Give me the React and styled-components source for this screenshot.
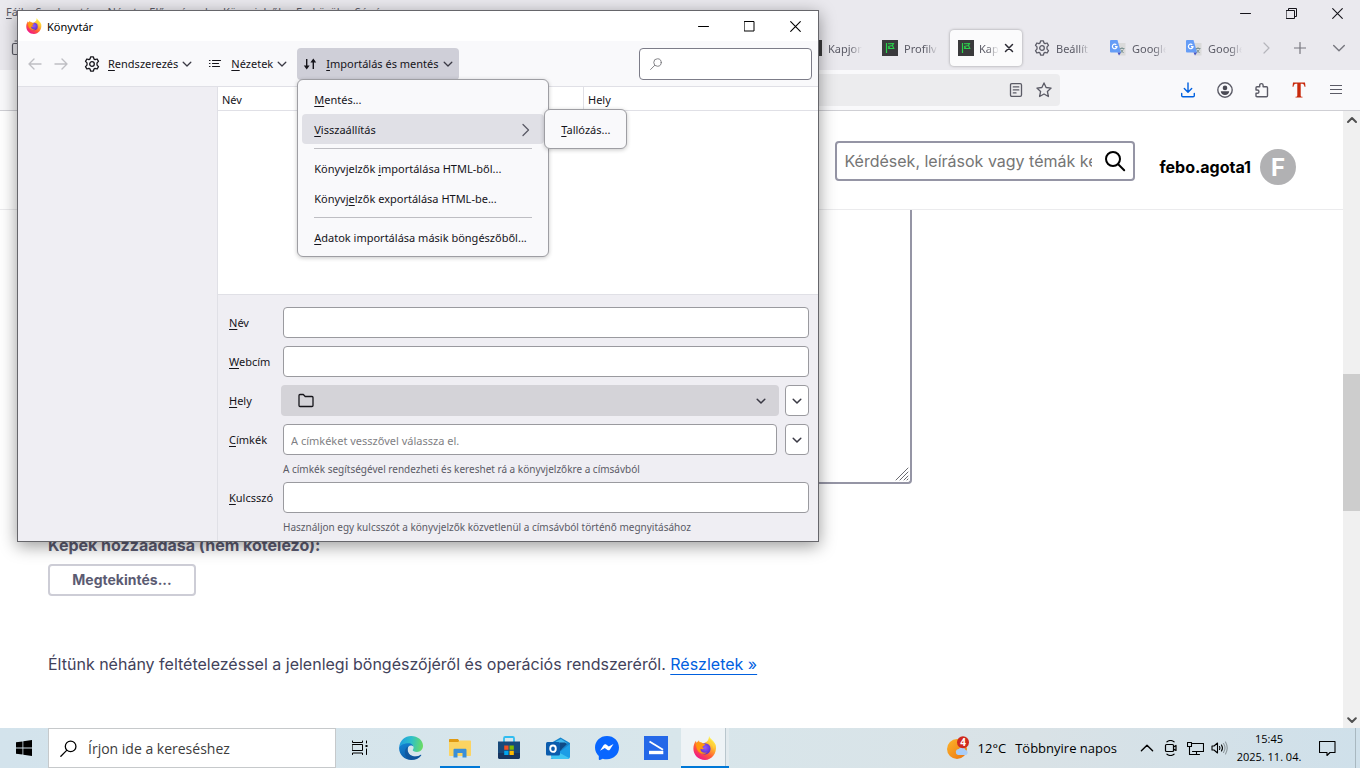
import React, { useState } from "react";
import styled, { createGlobalStyle, css } from "styled-components";

const ui = `"Noto Sans", "Open Sans", sans-serif`;
const shell = `"Open Sans", "Noto Sans", sans-serif`;
const inter = `Inter, "Liberation Sans", sans-serif`;

const GlobalStyle = createGlobalStyle`
  * {
    box-sizing: border-box;
  }
  body {
    margin: 0;
    overflow: hidden;
    background: #ffffff;
    font-family: ${ui};
    font-size: 11px;
    color: #15141a;
  }
  button, input, select, textarea {
    font: inherit;
    color: inherit;
    margin: 0;
    outline: none;
  }
  svg {
    display: block;
    flex: none;
  }
  u {
    text-underline-offset: 2px;
  }
`;

const Desktop = styled.div`
  position: relative;
  display: flex;
  flex-direction: column;
  height: 100vh;
`;

/* ---------- browser ---------- */

const Browser = styled.div`
  flex: 1;
  min-height: 0;
  display: flex;
  flex-direction: column;
`;

const PlainButton = styled.button`
  display: flex;
  align-items: center;
  justify-content: center;
  padding: 0;
  border: none;
  background: none;
`;

const MenuBar = styled.div`
  display: flex;
  align-items: center;
  height: 26px;
  background: #eae9ee;
`;

const MenuList = styled.div`
  display: flex;
  flex: 1;
  gap: 12px;
  padding: 0 6px 4px;
  color: #5b5b66;
`;

const WindowButton = styled(PlainButton)`
  width: 46px;
  height: ${p => p.$height || 26}px;
`;

const TabStrip = styled.div`
  display: flex;
  align-items: center;
  height: 44px;
  padding-left: 11px;
  background: #eae9ee;
  color: #5b5b66;
`;

const Tabs = styled.div`
  display: flex;
  flex: 1;
  justify-content: flex-end;
  gap: 4px;
`;

const Tab = styled(PlainButton)`
  width: 72px;
  height: 36px;
  padding: 0 8px;
  gap: 6px;
  justify-content: flex-start;
  border-radius: 4px;
  ${p =>
    p.$active &&
    css`
      gap: 5px;
      background: #fbfbfc;
      box-shadow: 0 0 3px rgba(0, 0, 0, 0.35);
    `}
`;

const TabLabel = styled.span`
  flex: 1;
  overflow: hidden;
  white-space: nowrap;
  text-align: left;
  mask-image: linear-gradient(to left, transparent, #000 12px);
`;

const StripButton = styled(PlainButton)`
  width: ${p => p.$width}px;
  height: 36px;
`;

const NavBar = styled.div`
  display: flex;
  align-items: center;
  height: 41px;
  padding: 0 6px 0 100px;
  background: #f9f9fb;
  border-bottom: 1px solid #cfcfd4;
  color: #5b5b66;
`;

const UrlBar = styled.div`
  display: flex;
  flex: 1;
  align-items: center;
  justify-content: flex-end;
  height: 32px;
  padding-right: 2px;
  margin-right: 109px;
  border-radius: 4px;
  background: #ececee;
`;

const ToolIcon = styled(PlainButton)`
  width: ${p => p.$width || 37}px;
  height: 32px;
`;

const Viewport = styled.div`
  flex: 1;
  min-height: 0;
  display: flex;
`;

const Page = styled.main`
  flex: 1;
  min-width: 0;
  overflow: hidden;
  font-family: ${inter};
  font-size: 16px;
`;

const PageHeader = styled.header`
  display: flex;
  align-items: center;
  justify-content: flex-end;
  gap: 25px;
  height: 99px;
  padding: 0 47px 0 48px;
  border-bottom: 1px solid #ebebed;
`;

const SiteSearch = styled.label`
  display: flex;
  align-items: center;
  width: 300px;
  height: 40px;
  margin-top: 2px;
  padding: 0 7px 0 8px;
  border: 2px solid #9595a5;
  border-radius: 4px;
  input {
    flex: 1;
    min-width: 0;
    margin-right: 12px;
    padding: 0;
    border: none;
    background: none;
  }
  input::placeholder {
    color: #757575;
    opacity: 1;
  }
`;

const Account = styled.a`
  display: flex;
  align-items: center;
  gap: 9px;
  margin-top: 14px;
  color: #000000;
  font-weight: 700;
  text-decoration: none;
`;

const Avatar = styled.span`
  display: flex;
  align-items: center;
  justify-content: center;
  width: 36px;
  height: 36px;
  border-radius: 50%;
  background: #b1b1b3;
  color: #ffffff;
  font-size: 24px;
`;

const Question = styled.form`
  display: flex;
  flex-direction: column;
  align-items: flex-start;
  padding: 0 48px;
  color: #5b5b72;
`;

const Details = styled.textarea`
  width: 864px;
  height: 274px;
  border: 2px solid #9595a5;
  border-top: none;
  border-radius: 0 0 4px 4px;
  resize: none;
`;

const DetailsWrap = styled.div`
  position: relative;
  display: flex;
  svg {
    position: absolute;
    right: 3px;
    bottom: 3px;
  }
`;

const FieldTitle = styled.h2`
  margin: 50px 0 8px;
  font-size: 16px;
  line-height: 22px;
  font-weight: 700;
`;

const Browse = styled.button`
  width: 148px;
  height: 32px;
  padding: 0 0 2px;
  border: 2px solid #cdcdd6;
  border-radius: 4px;
  background: #ffffff;
  font-size: 14px;
  font-weight: 700;
`;

const Notice = styled.p`
  margin: 56px 0 0;
  line-height: 24px;
  color: #42425a;
  a {
    color: #0060df;
    text-underline-offset: 4px;
  }
`;

const ScrollBar = styled.div`
  display: flex;
  flex-direction: column;
  align-items: center;
  width: 17px;
  background: #f0f0f0;
`;

const ScrollTrack = styled.div`
  flex: 1;
  width: 100%;
  display: grid;
  grid-template-rows: 246fr 137fr 200fr;
  &::before {
    content: "";
    grid-row: 2;
    background: #cdcdcd;
  }
`;

const ScrollButton = styled(PlainButton)`
  width: 17px;
  height: 17px;
`;

/* ---------- library window ---------- */

const LibraryWindow = styled.section`
  position: absolute;
  left: 17px;
  top: 10px;
  width: 802px;
  display: flex;
  flex-direction: column;
  border: 1px solid #66666b;
  background: #ffffff;
  box-shadow: 0 4px 16px rgba(0, 0, 0, 0.4);
`;

const TitleBar = styled.header`
  display: flex;
  align-items: center;
  height: 30px;
  padding-left: 8px;
  color: #000000;
  h1 {
    flex: 1;
    margin: 0 0 0 5px;
    font-size: 11px;
    font-weight: 400;
  }
`;

const Toolbar = styled.div`
  display: flex;
  align-items: center;
  height: 46px;
  padding: 0 6px 0 4px;
  background: #f9f9fb;
  border-bottom: 1px solid #e0e0e6;
`;

const ToolButton = styled(PlainButton)`
  height: 32px;
  padding: 0 6px;
  gap: ${p => p.$gap}px;
  border-radius: 4px;
  white-space: nowrap;
  background: ${p => (p.$open ? "#cfcfd8" : "none")};
`;

const ToolText = styled.span`
  display: flex;
  align-items: center;
  gap: 4px;
`;

const MenuAnchor = styled.div`
  position: relative;
  margin-left: 4px;
`;

const Popup = styled.div`
  position: absolute;
  z-index: 1;
  border: 1px solid #9e9ea3;
  border-radius: 6px;
  padding: 4px;
  background: #f9f9fb;
  box-shadow: 0 1px 4px rgba(0, 0, 0, 0.22);
`;

const MainPopup = styled(Popup)`
  left: 0;
  top: 31px;
  width: 252px;
`;

const SubPopup = styled(Popup)`
  left: 242px;
  top: -5px;
  width: 83px;
`;

const SubAnchor = styled.div`
  position: relative;
`;

const MenuItem = styled(PlainButton)`
  width: 100%;
  height: 30px;
  padding: 2px 12px 0;
  justify-content: space-between;
  border-radius: 4px;
  white-space: nowrap;
  background: ${p => (p.$active ? "#e0e0e6" : "none")};
`;

const Separator = styled.hr`
  margin: 4px 12px;
  border: none;
  height: 1px;
  background: #bebec3;
`;

const LibrarySearch = styled.label`
  display: flex;
  align-items: center;
  width: 173px;
  height: 32px;
  margin-left: auto;
  padding: 0 10px;
  border: 1px solid #7c7c88;
  border-radius: 4px;
  background: #ffffff;
  input {
    flex: 1;
    min-width: 0;
    border: none;
    background: none;
  }
`;

const LibraryBody = styled.div`
  display: grid;
  grid-template-columns: 200px 1fr;
`;

const Sidebar = styled.nav`
  background: #efeef3;
  border-right: 1px solid #e0e0e6;
`;

const Places = styled.div`
  height: 207px;
  background: #ffffff;
`;

const PlacesTable = styled.table`
  width: 100%;
  table-layout: fixed;
  border-collapse: separate;
  border-spacing: 0;
  th {
    height: 24px;
    padding: 2px 4px 0;
    font-weight: 400;
    text-align: left;
    border-bottom: 1px solid #e0e0e6;
  }
  th:first-child {
    width: 366px;
    border-right: 1px solid #e0e0e6;
  }
`;

const DetailsPane = styled.div`
  display: grid;
  grid-template-columns: 54px 1fr;
  row-gap: 8px;
  padding: 12px 9px 0 11px;
  border-top: 1px solid #e0e0e6;
  background: #efeef3;
`;

const Label = styled.label`
  align-self: start;
  line-height: 31px;
`;

const Cell = styled.div`
  display: flex;
  flex-wrap: wrap;
  gap: 0 8px;
`;

const Field = styled.input`
  flex: 1;
  min-width: 0;
  height: 31px;
  padding: 2px 7px 0;
  border: 1px solid #9a9a9f;
  border-radius: 4px;
  background: #ffffff;
  &::placeholder {
    color: #7f7f84;
    opacity: 1;
  }
`;

const Hint = styled.p`
  width: 100%;
  margin: 0 0 ${p => (p.$last ? 0 : -8)}px;
  height: ${p => (p.$last ? 28 : 27)}px;
  line-height: 28px;
  font-size: 10px;
  color: #5b5b66;
`;

const FolderPicker = styled.div`
  position: relative;
  flex: 1;
  margin: 0 -2px;
  select {
    display: block;
    width: 100%;
    height: 31px;
    appearance: none;
    border: none;
    border-radius: 4px;
    background: #d4d3d8;
  }
  svg {
    position: absolute;
    top: 8px;
    left: 17px;
    pointer-events: none;
  }
  svg + svg {
    left: auto;
    right: 13px;
    top: 11px;
  }
`;

const Expander = styled(PlainButton)`
  width: 24px;
  height: 31px;
  border: 1px solid #9a9a9f;
  border-radius: 4px;
  background: #ffffff;
`;

/* ---------- taskbar ---------- */

const Taskbar = styled.footer`
  display: flex;
  align-items: stretch;
  height: 40px;
  font-family: ${shell};
  background: linear-gradient(90deg, #d3e3ec, #d8e6eb 50%, #d9e2e6 76%, #cfe0ea);
  color: #000000;
`;

const StartButton = styled(PlainButton)`
  width: 48px;
`;

const TaskSearch = styled.label`
  display: flex;
  align-items: center;
  gap: 11px;
  width: 288px;
  padding-left: 11px;
  border: 1px solid #c6c9cb;
  background: #ffffff;
  input {
    flex: 1;
    min-width: 0;
    padding: 0;
    border: none;
    background: none;
    font-size: 14px;
  }
  input::placeholder {
    color: #3c3c3c;
    opacity: 1;
  }
`;

const TaskApps = styled.div`
  display: flex;
  gap: 1px;
  margin-left: 3px;
`;

const AppButton = styled(PlainButton)`
  width: 48px;
  border-bottom: 2px solid transparent;
  padding-top: 2px;
  ${p =>
    p.$active &&
    css`
      background: linear-gradient(90deg, #eef3f6 44px, #b9c6cd 44px, #b9c6cd 45px, #e2eaee 45px);
      border-bottom-color: #0078d7;
    `}
  ${p =>
    p.$running &&
    css`
      position: relative;
      &::after {
        content: "";
        position: absolute;
        left: 4px;
        right: 4px;
        bottom: -2px;
        height: 2px;
        background: #0078d7;
      }
    `}
`;

const Tray = styled.div`
  display: flex;
  align-items: center;
  margin-left: auto;
`;

const Weather = styled(PlainButton)`
  gap: 9px;
  font-size: 13px;
  margin-right: 18px;
  white-space: nowrap;
`;

const TrayButton = styled(PlainButton)`
  width: 24px;
  height: 40px;
`;

const Clock = styled.time`
  display: flex;
  flex-direction: column;
  align-items: center;
  width: 76px;
  line-height: 18px;
  white-space: nowrap;
`;

const Notifications = styled(PlainButton)`
  width: 40px;
  height: 40px;
`;

const ShowDesktop = styled(PlainButton)`
  width: 5px;
  height: 40px;
  margin-left: 8px;
  border-left: 1px solid #a9b8c0;
`;

/* ---------- icons ---------- */

const Stroke = ({ w = 16, h = w, box, d, sw = 1, color = "currentColor", children }) => (
  <svg
    width={w}
    height={h}
    viewBox={box || `0 0 ${w} ${h}`}
    fill="none"
    stroke={color}
    strokeWidth={sw}
    strokeLinecap="round"
    strokeLinejoin="round"
  >
    {d && <path d={d} />}
    {children}
  </svg>
);

const Chevron = ({ size = 10, sw = 1.3, color = "#3a3944" }) => (
  <Stroke w={size} box="0 0 10 10" d="M1.2 3.2L5 7l3.8-3.8" sw={sw} color={color} />
);

const ChevronUp = ({ size = 10, sw = 1.4, color }) => (
  <Stroke w={size} box="0 0 10 10" d="M1 7l4-4 4 4" sw={sw} color={color} />
);

const CloseIcon = ({ size = 11, sw = 1.1 }) => (
  <Stroke w={size} box="0 0 11 11" d="M.7.7l9.6 9.6M10.3.7L.7 10.3" sw={sw} />
);

const Gear = ({ size = 16 }) => (
  <Stroke w={size} box="0 0 16 16" sw={1.3}>
    <path d="M6.6.9h2.8l.5 2 1.2.7 2-.6 1.4 2.4-1.5 1.5v2.2l1.5 1.5-1.4 2.4-2-.6-1.2.7-.5 2H6.6l-.5-2-1.2-.7-2 .6-1.4-2.4L3 9.1V6.9L1.5 5.400 2.900 3l2 .6 1.200-.7z" />
    <circle cx="8" cy="8" r="2.300" />
  </Stroke>
);

const Firefox = ({ size, id }) => (
  <svg width={size} height={size} viewBox="0 0 24 24">
    <defs>
      <linearGradient id={`${id}a`} x1="0.8" y1="0.1" x2="0.25" y2="0.95">
        <stop offset="0" stopColor="#fff44f" />
        <stop offset="0.35" stopColor="#ffb02e" />
        <stop offset="0.65" stopColor="#ff5a36" />
        <stop offset="1" stopColor="#f0148c" />
      </linearGradient>
      <radialGradient id={`${id}b`} cx="0.5" cy="0.4" r="0.6">
        <stop offset="0" stopColor="#9059ff" />
        <stop offset="1" stopColor="#5b2fc9" />
      </radialGradient>
    </defs>
    <path
      fill={`url(#${id}a)`}
      d="M16 0c.6 2.200 4 4.200 5.800 7.200.6 1 .9 1.700 1.100 2.600C24 17.500 18.600 24 12 24 5.300 24 .4 19 .4 12.800c0-3 .8-5.700 2.500-8l.6 2L6 4.200l.7 2.300c1.300-.2 2.600 0 3.800.7C12.500 6.600 16 5.500 16 0z"
    />
    <circle cx="12" cy="12.800" r="5.600" fill={`url(#${id}b)`} />
    <path
      fill="#ff980e"
      d="M3 7.500c2-1.600 4.900-1.500 6.900.3l2.400.4c-.3 1.400-2.600 1.500-2.800 2.600 0 1 .7 1.500 1.900 1.500-1.200 1.200-2.900.9-3.900.4-.3 3.200 3.300 5 6.400 3.500C11.600 19.500 3 18.500 3 7.500z"
    />
    <path fill="#ffd43a" d="M16.200 2.500c3 3 5.800 6 4.800 10.500-.6-2.800-2.100-5-5.100-6.300 1-1.200 1-2.500.3-4.200z" />
  </svg>
);

const KapIcon = () => (
  <svg width="16" height="16" viewBox="0 0 16 16">
    <rect width="16" height="16" fill="#3a3a3c" />
    <path d="M4.500 3v10" stroke="#2bd34c" strokeWidth="1.200" />
    <path d="M6 3.800l5.500-.3-1 2 1.300 3H6.500M6 6.500l4.500-1M6 8.500l2-2" fill="none" stroke="#2bd34c" strokeWidth="1.100" />
  </svg>
);

const TranslateIcon = () => (
  <svg width="16" height="16" viewBox="0 0 16 16">
    <path d="M6 3h9.500v12.500H9z" fill="#dadada" />
    <path d="M9.500 8.500h5M12 7.200v1.300M10.500 9.500l3 3.500M13.500 9.500l-3 3.500" stroke="#7e9494" strokeWidth="1" />
    <path d="M1 0h6.500l3.500 12.500H1a1 1 0 0 1-1-1V1a1 1 0 0 1 1-1z" fill="#669df6" />
    <path d="M7.500 12.500H11l-2 3z" fill="#4453c4" />
    <path d="M6.300 4.800A2.300 2.300 0 1 0 7 6.600H5" fill="none" stroke="#fff" strokeWidth="1.200" />
  </svg>
);

const DownloadIcon = () => (
  <Stroke color="#0061e0" sw={1.4} d="M8 1v9M4.300 6.500L8 10.200l3.700-3.700M1.700 11.500v2c0 .7.500 1.200 1.200 1.200h10.200c.7 0 1.200-.5 1.200-1.200v-2" />
);

const AccountIcon = () => (
  <svg width="16" height="16" viewBox="0 0 16 16">
    <circle cx="8" cy="8" r="7.200" fill="none" stroke="#5b5b66" strokeWidth="1.400" />
    <circle cx="8" cy="5.900" r="2.300" fill="#4a4a54" />
    <path d="M3.800 9.300h8.400c0 2.200-1.900 3.700-4.200 3.700s-4.200-1.500-4.200-3.700z" fill="#4a4a54" />
  </svg>
);

const PuzzleIcon = () => (
  <Stroke sw={1.4} d="M5.700 4.800V3.300a1.700 1.700 0 0 1 3.400 0v1.500h3.400c.6 0 1 .4 1 1v8c0 .6-.4 1-1 1H3c-.6 0-1-.4-1-1v-2.500h1.300a1.600 1.600 0 0 0 0-3.300H2V5.800c0-.6.400-1 1-1z" />
);

const StarIcon = () => (
  <Stroke sw={1.300} d="M8 .9l2.100 4.600 5 .6-3.700 3.400 1 5L8 12l-4.400 2.500 1-5L.9 6.100l5-.6z" />
);

const ReaderIcon = () => (
  <Stroke w={14} h={16} sw={1.300} d="M2.800 1.700h8.400c.8 0 1.300.5 1.300 1.300v10c0 .8-.5 1.300-1.300 1.300H2.800c-.8 0-1.300-.5-1.300-1.300V3c0-.8.500-1.300 1.300-1.300zM4.300 4.900h5.500M4.300 7.900h5.500M4.300 10.900h2.700" />
);

const SwapIcon = () => (
  <svg width="14" height="14" viewBox="0 0 14 14">
    <path d="M3.700 2v8M10.300 12v-8" stroke="#15141a" strokeWidth="1.400" />
    <path d="M.8 8.500h5.800L3.700 12.500zM7.400 5.500h5.800L10.300 1.500z" fill="#15141a" />
  </svg>
);

const ListIcon = () => (
  <Stroke w={14} h={14} d="M1.500 3.500h.5M1.500 6.500h.5M1.500 9.500h.5M4.500 3.500h8M4.500 6.500h6M4.500 9.500h7" sw={1.200} />
);

const FolderIcon = () => (
  <Stroke sw={1.300} d="M1 12.500v-10c0-.6.400-1 1-1h3.300L7.200 3.500H14c.6 0 1 .4 1 1v8c0 .6-.4 1-1 1H2c-.6 0-1-.4-1-1z" />
);

const MagnifierLeft = ({ size = 12, sw = 1.200, color = "#77777c" }) => (
  <Stroke w={size} box="0 0 16 16" sw={sw} color={color}>
    <circle cx="10" cy="6" r="5" />
    <path d="M6.300 9.800L.8 15.300" />
  </Stroke>
);

const TypeIcon = () => (
  <svg width="14" height="16" viewBox="0 0 14 16">
    <path
      fill="#c8290b"
      d="M1 .5h12l.5 4.200h-1c-.3-1.700-.9-2.900-2.400-2.900H8.700v11.400c0 1.200.4 1.500 1.800 1.600v.7h-7v-.7c1.400-.1 1.800-.4 1.800-1.600V1.800H3.900C2.400 1.800 1.800 3 1.500 4.700h-1z"
    />
  </svg>
);

const EdgeIcon = () => (
  <svg width="24" height="24" viewBox="0 0 24 24">
    <defs>
      <linearGradient id="edgeTop" x1="0" y1="0.4" x2="1" y2="0.5">
        <stop offset="0" stopColor="#1f9de0" />
        <stop offset="0.5" stopColor="#2fc0c8" />
        <stop offset="1" stopColor="#6bdc62" />
      </linearGradient>
      <linearGradient id="edgeLow" x1="0" y1="0" x2="0.5" y2="1">
        <stop offset="0" stopColor="#1488d8" />
        <stop offset="1" stopColor="#0c59a4" />
      </linearGradient>
    </defs>
    <path d="M.1 12.200C.1 8.700 4.500 6 8.800 6c3.600 0 5.800 2.300 5.800 5-.6-1-1.700-1.400-2.700-1.400-2 0-3.300 2-3.300 4.200 0 3.700 3.300 6.600 7.300 6.600 2.600 0 4.400-.7 5.700-1.600.4-.3.900.1.600.6C20.100 22.300 16.300 24 12.200 24 5.500 24 .1 18.700.1 12.200z" fill="url(#edgeLow)" />
    <path d="M9 10.500c-4 2.500-4.500 8.500.2 12.200 4.800 1.800 10.300.3 12.900-4-1.800 1.300-3.600 1.800-6 1.800-4 0-7.300-2.900-7.300-6.600 0-1.200.3-2.400.2-3.400z" fill="#114f93" opacity="0.600" />
    <path d="M.2 11C.8 4.500 6 0 12.200 0 18.800 0 24 4.300 24 9.800c0 3.600-2.700 6.200-6 6.200-2.800 0-4.300-1-4.300-1.900 0-.7.9-1 .9-2.700 0-2-2-4.100-5.200-4.100C5.500 7.300 1.600 9 .2 11z" fill="url(#edgeTop)" />
  </svg>
);

const ExplorerIcon = () => (
  <svg width="22" height="20" viewBox="0 0 22 20">
    <path d="M0 2c0-.6.400-1 1-1h8l2 3H0z" fill="#e09a12" />
    <path d="M0 4h9l2-1.500h10c.6 0 1 .4 1 1V17c0 .6-.4 1-1 1H1c-.6 0-1-.4-1-1z" fill="#fcd462" />
    <path d="M4.500 19.500V12c0-.8.500-1.300 1.300-1.300h10.400c.8 0 1.300.5 1.300 1.300v7.500h-4V15h-5v4.500z" fill="#3a8fd8" />
  </svg>
);

const StoreIcon = () => (
  <svg width="24" height="24" viewBox="0 0 24 24">
    <path d="M7 7V2.200C7 1.500 7.500 1 8.200 1h7.600c.7 0 1.200.5 1.200 1.200V7" fill="none" stroke="#31bdf0" strokeWidth="1.800" />
    <path d="M1 5.500h22V21c0 1.200-.8 2-2 2H3c-1.200 0-2-.8-2-2z" fill="#17497a" />
    <path d="M1 17h22v4c0 1.200-.8 2-2 2H3c-1.200 0-2-.8-2-2z" fill="#173560" />
    <path d="M7.200 9.500h4.300v4.300H7.200z" fill="#f25022" />
    <path d="M12.500 9.500h4.300v4.300h-4.300z" fill="#7fba00" />
    <path d="M7.200 14.800h4.300V19H7.200z" fill="#00a4ef" />
    <path d="M12.500 14.800h4.300V19h-4.300z" fill="#ffb900" />
  </svg>
);

const OutlookIcon = () => (
  <svg width="24" height="22" viewBox="0 0 24 22">
    <path d="M5 6L14.500.5 24 6v9H5z" fill="#1583cc" />
    <path d="M10 4.500l5-2.500 6 4-5 6h-6z" fill="#42b8ee" />
    <path d="M14 5.500h5l2 1.500-8 8z" fill="#0f4a86" />
    <path d="M24 7v12.500c0 1.400-1 2.500-2.500 2.500H4.500z" fill="#1c9de6" />
    <path d="M5 15l8 .5 10.500 5.800c-.5.400-1.200.7-2 .7h-14C6 22 5 21 5 19.500z" fill="#3fc4f2" />
    <rect x="0" y="5" width="14" height="13.500" rx="1.500" fill="#0b5cad" />
    <ellipse cx="7" cy="11.700" rx="2.800" ry="3.200" fill="none" stroke="#fff" strokeWidth="1.900" />
  </svg>
);

const MessengerIcon = () => (
  <svg width="24" height="24" viewBox="0 0 24 24">
    <path d="M12 0C5.200 0 0 4.900 0 11.500c0 3.500 1.500 6.500 3.800 8.500v3.200c0 .6.600 1 1.200.7l2.700-1.200c1.300.4 2.800.6 4.300.6 6.800 0 12-5 12-11.700S18.800 0 12 0z" fill="#0866ff" />
    <path d="M5 14.800l3.700-5.700c.6-.9 1.700-1.100 2.500-.5l2.600 2 4.700-2.600-3.500 5.500c-.6.900-1.700 1.100-2.500.5l-2.700-2z" fill="#fff" />
  </svg>
);

const ScanIcon = () => (
  <svg width="24" height="24" viewBox="0 0 24 24">
    <rect width="24" height="24" fill="#2468e8" />
    <path d="M5.500 5.500L19 13.800" fill="none" stroke="#fff" strokeWidth="1.800" />
    <path d="M5 14.800h14.300v3.400H5z" fill="#fff" />
  </svg>
);

const WeatherIcon = () => (
  <svg width="22" height="24" viewBox="0 0 22 24">
    <defs>
      <linearGradient id="sun" x1="0" y1="0" x2="1" y2="1">
        <stop offset="0" stopColor="#fdb52a" />
        <stop offset="1" stopColor="#ea7312" />
      </linearGradient>
    </defs>
    <circle cx="10" cy="13" r="10" fill="url(#sun)" />
    <path d="M11 19a3 3 0 0 1 .6-5.900 4 4 0 0 1 7 1 2.600 2.600 0 0 1 .6 4.900z" fill="#a9cdf8" />
    <circle cx="16" cy="6.200" r="6" fill="#cf2a1e" />
    <text x="16" y="9.700" textAnchor="middle" fontFamily="Open Sans" fontWeight="700" fontSize="10" fill="#fff">
      4
    </text>
  </svg>
);

/* ---------- page ---------- */

const menus = [
  ["F", "ájl"],
  ["S", "zerkesztés"],
  ["N", "ézet"],
  ["E", "lőzmények"],
  ["K", "önyvjelzők"],
  ["E", "szközök"],
  ["S", "úgó"]
];

const tabs = [
  { icon: <KapIcon />, label: "Kapjon" },
  { icon: <KapIcon />, label: "Profilv" },
  { icon: <KapIcon />, label: "Kap", active: true },
  { icon: <Gear />, label: "Beállít" },
  { icon: <TranslateIcon />, label: "Google" },
  { icon: <TranslateIcon />, label: "Google" }
];

const apps = [
  { name: "Edge", icon: <EdgeIcon /> },
  { name: "Fájlkezelő", icon: <ExplorerIcon />, running: true },
  { name: "Store", icon: <StoreIcon /> },
  { name: "Outlook", icon: <OutlookIcon /> },
  { name: "Messenger", icon: <MessengerIcon /> },
  { name: "Scan", icon: <ScanIcon /> },
  { name: "Firefox", icon: <Firefox size={24} id="task" />, active: true }
];

function BrowserWindow() {
  return (
    <Browser>
      <MenuBar>
        <MenuList>
          {menus.map(([key, rest]) => (
            <span key={key + rest}>
              <u>{key}</u>
              {rest}
            </span>
          ))}
        </MenuList>
        <WindowButton aria-label="Kis méret">
          <Stroke w={11} d="M.5 5.500h10" />
        </WindowButton>
        <WindowButton aria-label="Előző méret">
          <Stroke w={11} d="M.5 2.500h8v8h-8zM2.500 2.500v-2h8v8h-2" />
        </WindowButton>
        <WindowButton aria-label="Bezárás">
          <CloseIcon />
        </WindowButton>
      </MenuBar>
      <TabStrip>
        <Stroke d="M3 3.500h10c1 0 1.500.5 1.500 1.500v8c0 1-.5 1.500-1.500 1.500H3c-1 0-1.500-.5-1.500-1.500V5c0-1 .5-1.500 1.500-1.500zM4 1h9" sw={1.200} />
        <Tabs>
          {tabs.map((tab, i) => (
            <Tab key={i} $active={tab.active}>
              {tab.icon}
              <TabLabel>{tab.label}</TabLabel>
              {tab.active && (
                <Stroke w={10} d="M1.500 1.500l7 7M8.500 1.500l-7 7" sw={1.500} color="#2b2a33" />
              )}
            </Tab>
          ))}
        </Tabs>
        <StripButton $width={32} aria-label="Görgetés">
          <Stroke w={12} d="M4 1l5 5-5 5" color="#b5b5bb" sw={1.200} />
        </StripButton>
        <StripButton $width={36} aria-label="Új lap">
          <Stroke w={12} d="M6 .5v11M.5 6h11" color="#77777f" sw={1.200} />
        </StripButton>
        <StripButton $width={42} aria-label="Összes lap">
          <Chevron size={14} sw={1} color="#77777f" />
        </StripButton>
      </TabStrip>
      <NavBar>
        <UrlBar>
          <ToolIcon $width={28} aria-label="Olvasó nézet">
            <ReaderIcon />
          </ToolIcon>
          <ToolIcon $width={28} aria-label="Könyvjelző">
            <StarIcon />
          </ToolIcon>
        </UrlBar>
        <ToolIcon aria-label="Letöltések">
          <DownloadIcon />
        </ToolIcon>
        <ToolIcon aria-label="Fiók">
          <AccountIcon />
        </ToolIcon>
        <ToolIcon aria-label="Kiegészítők">
          <PuzzleIcon />
        </ToolIcon>
        <ToolIcon aria-label="Szöveg">
          <TypeIcon />
        </ToolIcon>
        <ToolIcon aria-label="Menü">
          <Stroke w={12} d="M.5 1.500h11M.5 5.500h11M.5 9.500h11" sw={1.200} />
        </ToolIcon>
      </NavBar>
      <Viewport>
        <Page>
          <PageHeader>
            <SiteSearch>
              <input type="text" aria-label="Keresés" placeholder="Kérdések, leírások vagy témák keresése" />
              <Stroke w={22} sw={2} color="#000">
                <circle cx="9" cy="9" r="7" />
                <path d="M14.200 14.200l6 6" />
              </Stroke>
            </SiteSearch>
            <Account href="#fiok">
              febo.agota1
              <Avatar>F</Avatar>
            </Account>
          </PageHeader>
          <Question>
            <DetailsWrap>
              <Details aria-label="Részletek" />
              <Stroke w={14} d="M1 13L13 1M5 13l8-8M9 13l4-4M12 13l1-1" color="#6a6a70" />
            </DetailsWrap>
            <FieldTitle>Képek hozzáadása (nem kötelező):</FieldTitle>
            <Browse type="button">Megtekintés...</Browse>
            <Notice>
              Éltünk néhány feltételezéssel a jelenlegi böngészőjéről és operációs
              rendszeréről. <a href="#reszletek">Részletek »</a>
            </Notice>
          </Question>
        </Page>
        <ScrollBar>
          <ScrollButton aria-label="Fel">
            <ChevronUp sw={2} color="#505050" />
          </ScrollButton>
          <ScrollTrack />
          <ScrollButton aria-label="Le">
            <Chevron sw={2} color="#505050" />
          </ScrollButton>
        </ScrollBar>
      </Viewport>
    </Browser>
  );
}

function ImportMenu() {
  return (
    <MainPopup role="menu">
      <MenuItem role="menuitem">
        <span><u>M</u>entés...</span>
      </MenuItem>
      <SubAnchor>
        <MenuItem role="menuitem" $active>
          <span><u>V</u>isszaállítás</span>
          <Stroke w={12} h={14} d="M3 1.500L8.500 7 3 12.500" color="#5b5b66" sw={1.300} />
        </MenuItem>
        <SubPopup role="menu">
          <MenuItem role="menuitem">
            <span><u>T</u>allózás...</span>
          </MenuItem>
        </SubPopup>
      </SubAnchor>
      <Separator />
      <MenuItem role="menuitem">
        <span>Könyvjelzők <u>i</u>mportálása HTML-ből...</span>
      </MenuItem>
      <MenuItem role="menuitem">
        <span>Könyvj<u>e</u>lzők exportálása HTML-be...</span>
      </MenuItem>
      <Separator />
      <MenuItem role="menuitem">
        <span><u>A</u>datok importálása másik böngészőből...</span>
      </MenuItem>
    </MainPopup>
  );
}

function Library() {
  const [open, setOpen] = useState(true);

  return (
    <LibraryWindow>
      <TitleBar>
        <Firefox size={16} id="title" />
        <h1>Könyvtár</h1>
        <WindowButton $height={30} aria-label="Kis méret">
          <Stroke w={11} d="M.5 5.500h10" />
        </WindowButton>
        <WindowButton $height={30} aria-label="Teljes méret">
          <Stroke w={11} d="M.5.5h9.500v9.500H.5z" />
        </WindowButton>
        <WindowButton $height={30} aria-label="Bezárás">
          <CloseIcon />
        </WindowButton>
      </TitleBar>
      <Toolbar>
        <ToolButton aria-label="Vissza">
          <Stroke w={14} d="M13 7H1M6 2L1 7l5 5" color="#bfbfc4" sw={1.400} />
        </ToolButton>
        <ToolButton aria-label="Előre">
          <Stroke w={14} d="M1 7h12M8 2l5 5-5 5" color="#bfbfc4" sw={1.400} />
        </ToolButton>
        <MenuAnchor>
          <ToolButton $gap={8}>
            <Gear />
            <ToolText>
              <span><u>R</u>endszerezés</span>
              <Chevron />
            </ToolText>
          </ToolButton>
        </MenuAnchor>
        <MenuAnchor>
          <ToolButton $gap={9}>
            <ListIcon />
            <ToolText>
              <span><u>N</u>ézetek</span>
              <Chevron />
            </ToolText>
          </ToolButton>
        </MenuAnchor>
        <MenuAnchor>
          <ToolButton $gap={9} $open={open} onClick={() => setOpen(!open)}>
            <SwapIcon />
            <ToolText>
              <span><u>I</u>mportálás és mentés</span>
              <Chevron />
            </ToolText>
          </ToolButton>
          {open && <ImportMenu />}
        </MenuAnchor>
        <LibrarySearch>
          <MagnifierLeft />
          <input type="text" aria-label="Könyvjelzők keresése" />
        </LibrarySearch>
      </Toolbar>
      <LibraryBody>
        <Sidebar />
        <div>
          <Places>
            <PlacesTable>
              <thead>
                <tr>
                  <th>Név</th>
                  <th>Hely</th>
                </tr>
              </thead>
            </PlacesTable>
          </Places>
          <DetailsPane>
            <Label htmlFor="name"><u>N</u>év</Label>
            <Cell>
              <Field id="name" />
            </Cell>
            <Label htmlFor="url"><u>W</u>ebcím</Label>
            <Cell>
              <Field id="url" />
            </Cell>
            <Label htmlFor="folder"><u>H</u>ely</Label>
            <Cell>
              <FolderPicker>
                <select id="folder" />
                <FolderIcon />
                <Chevron sw={1.500} />
              </FolderPicker>
              <Expander aria-label="Mappák">
                <Chevron sw={1.500} />
              </Expander>
            </Cell>
            <Label htmlFor="tags"><u>C</u>ímkék</Label>
            <Cell>
              <Field id="tags" placeholder="A címkéket vesszővel válassza el." />
              <Expander aria-label="Címkék listája">
                <Chevron sw={1.500} />
              </Expander>
              <Hint>A címkék segítségével rendezheti és kereshet rá a könyvjelzőkre a címsávból</Hint>
            </Cell>
            <Label htmlFor="keyword"><u>K</u>ulcsszó</Label>
            <Cell>
              <Field id="keyword" />
              <Hint $last>Használjon egy kulcsszót a könyvjelzők közvetlenül a címsávból történő megnyitásához</Hint>
            </Cell>
          </DetailsPane>
        </div>
      </LibraryBody>
    </LibraryWindow>
  );
}

function WindowsTaskbar() {
  return (
    <Taskbar>
      <StartButton aria-label="Start">
        <svg width="16" height="16" viewBox="0 0 16 16">
          <path d="M0 2.300l6.500-.9v6.200H0zM7.300 1.300L16 0v7.600H7.300zM0 8.400h6.500v6.200L0 13.700zM7.300 8.400H16V16l-8.700-1.300z" />
        </svg>
      </StartButton>
      <TaskSearch>
        <MagnifierLeft size={17} color="#000" sw={1.200} />
        <input type="text" aria-label="Keresés" placeholder="Írjon ide a kereséshez" />
      </TaskSearch>
      <AppButton aria-label="Feladatnézet">
        <Stroke w={16} d="M.5 1v1.500h10V1M.5 14.500V13h10v1.500M.5 4.500h10v6H.5zM14.500 1v2M14.500 9v5.500" color="#000">
          <path d="M13.500 5h2v2h-2z" fill="#000" stroke="none" />
        </Stroke>
      </AppButton>
      <TaskApps>
        {apps.map(app => (
          <AppButton key={app.name} aria-label={app.name} $active={app.active} $running={app.running}>
            {app.icon}
          </AppButton>
        ))}
      </TaskApps>
      <Tray>
        <Weather>
          <WeatherIcon />
          <span>12°C</span>
          <span>Többnyire napos</span>
        </Weather>
        <TrayButton aria-label="Rejtett ikonok">
          <ChevronUp size={14} sw={1} />
        </TrayButton>
        <TrayButton aria-label="Kamera">
          <Stroke w={14} h={16} d="M3 1.800C5 .3 8 .3 10 1.800M3 14.200c2 1.500 5 1.500 7 0M2.500 4.500h6c.6 0 1 .4 1 1v5c0 .6-.4 1-1 1h-6c-.6 0-1-.4-1-1v-5c0-.6.400-1 1-1zM9.500 7l2.500-1.500v5L9.500 9" sw={1.200} />
        </TrayButton>
        <TrayButton aria-label="Hálózat">
          <Stroke w={17} h={15} d="M5.500 2.500h11v8h-11M.5 1.500h4v4h-4zM2.500 5.500v8M9.500 10.500v3M2.500 13.500h10" sw={1.100} />
        </TrayButton>
        <TrayButton aria-label="Hangerő">
          <Stroke w={17} h={14} d="M1 5v4h2l3.500 3V2L3 5zM8.500 5.500c.6 1 .6 2 0 3" sw={1.100}>
            <path d="M10.500 4c1.300 2 1.300 4 0 6" />
            <path d="M12.500 2.500c2 3 2 6 0 9M14.500 1c2.300 4 2.300 8 0 12" stroke="#8d979c" />
          </Stroke>
        </TrayButton>
        <Clock>
          <span>15:45</span>
          <span>2025. 11. 04.</span>
        </Clock>
        <Notifications aria-label="Értesítések">
          <Stroke w={17} h={17} d="M.5 1.500h15.500v11h-5l-3 3v-3H.5z" sw={1.100} />
        </Notifications>
        <ShowDesktop aria-label="Asztal" />
      </Tray>
    </Taskbar>
  );
}

export default function App() {
  return (
    <Desktop>
      <GlobalStyle />
      <BrowserWindow />
      <WindowsTaskbar />
      <Library />
    </Desktop>
  );
}
